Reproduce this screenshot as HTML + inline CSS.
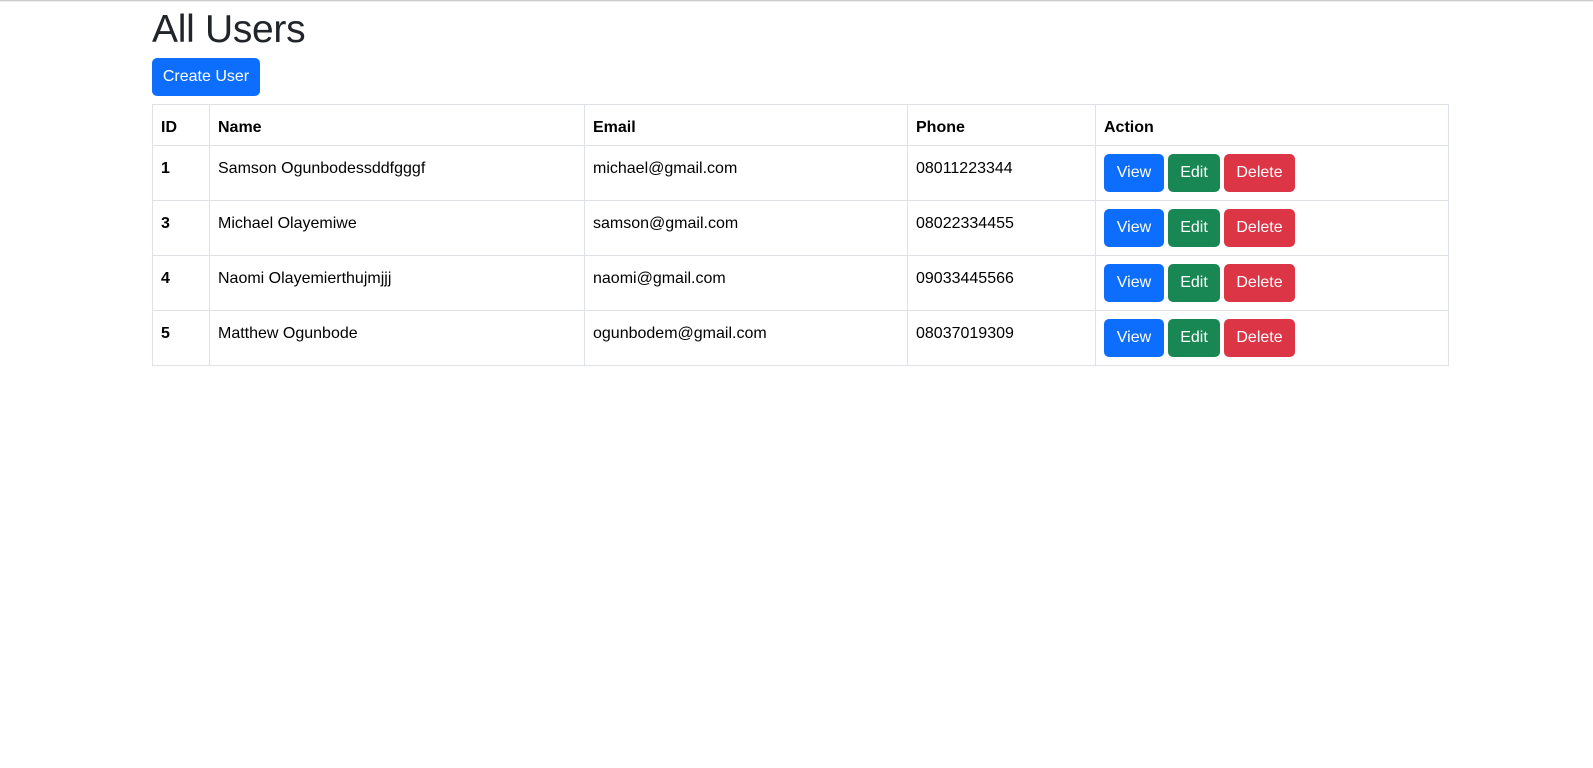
<!DOCTYPE html>
<html><head><meta charset="utf-8"><style>
*{box-sizing:border-box}
body{margin:0;font-family:"Liberation Sans",sans-serif;font-size:16px;color:#212529;background:#fff}
.top{height:2px;border-top:1px solid #ccc;background:#f0f0f0}
.c{position:absolute;left:152px;top:0;width:1296px}
h1{position:absolute;left:0;top:7px;margin:0;font-weight:400;font-size:39px;line-height:46px;letter-spacing:-0.3px}
.cb{position:absolute;left:0;top:58px;width:108px;height:38px;background:#0d6efd;color:#fff;border-radius:5px;font-size:16px;line-height:38px;text-align:center}
table{position:absolute;left:0;top:104px;width:1296px;border-collapse:collapse;table-layout:fixed;color:#000}
td,th{border:1px solid #dee2e6;padding:11px 8px 5px;vertical-align:top;text-align:left;font-size:16px;line-height:24px}
th{height:41px}
td{height:55px}
td:first-child{font-weight:bold}
td.a{padding-top:8px}
.b{display:inline-block;height:38px;line-height:38px;color:#fff;border-radius:5px;text-align:center;margin-right:4px;font-size:16px}
.v{background:#0d6efd;width:60px}.e{background:#198754;width:52px}.d{background:#dc3545;width:71px}
</style></head><body>
<div class="top"></div>
<div class="c">
<h1>All Users</h1>
<div class="cb">Create User</div>
<table>
<colgroup><col style="width:57px"><col style="width:375px"><col style="width:323px"><col style="width:188px"><col style="width:353px"></colgroup>
<tr><th>ID</th><th>Name</th><th>Email</th><th>Phone</th><th>Action</th></tr>
<tr><td>1</td><td>Samson Ogunbodessddfgggf</td><td>michael@gmail.com</td><td>08011223344</td><td class="a"><span class="b v">View</span><span class="b e">Edit</span><span class="b d">Delete</span></td></tr>
<tr><td>3</td><td>Michael Olayemiwe</td><td>samson@gmail.com</td><td>08022334455</td><td class="a"><span class="b v">View</span><span class="b e">Edit</span><span class="b d">Delete</span></td></tr>
<tr><td>4</td><td>Naomi Olayemierthujmjjj</td><td>naomi@gmail.com</td><td>09033445566</td><td class="a"><span class="b v">View</span><span class="b e">Edit</span><span class="b d">Delete</span></td></tr>
<tr><td>5</td><td>Matthew Ogunbode</td><td>ogunbodem@gmail.com</td><td>08037019309</td><td class="a"><span class="b v">View</span><span class="b e">Edit</span><span class="b d">Delete</span></td></tr>
</table>
</div>
</body></html>
